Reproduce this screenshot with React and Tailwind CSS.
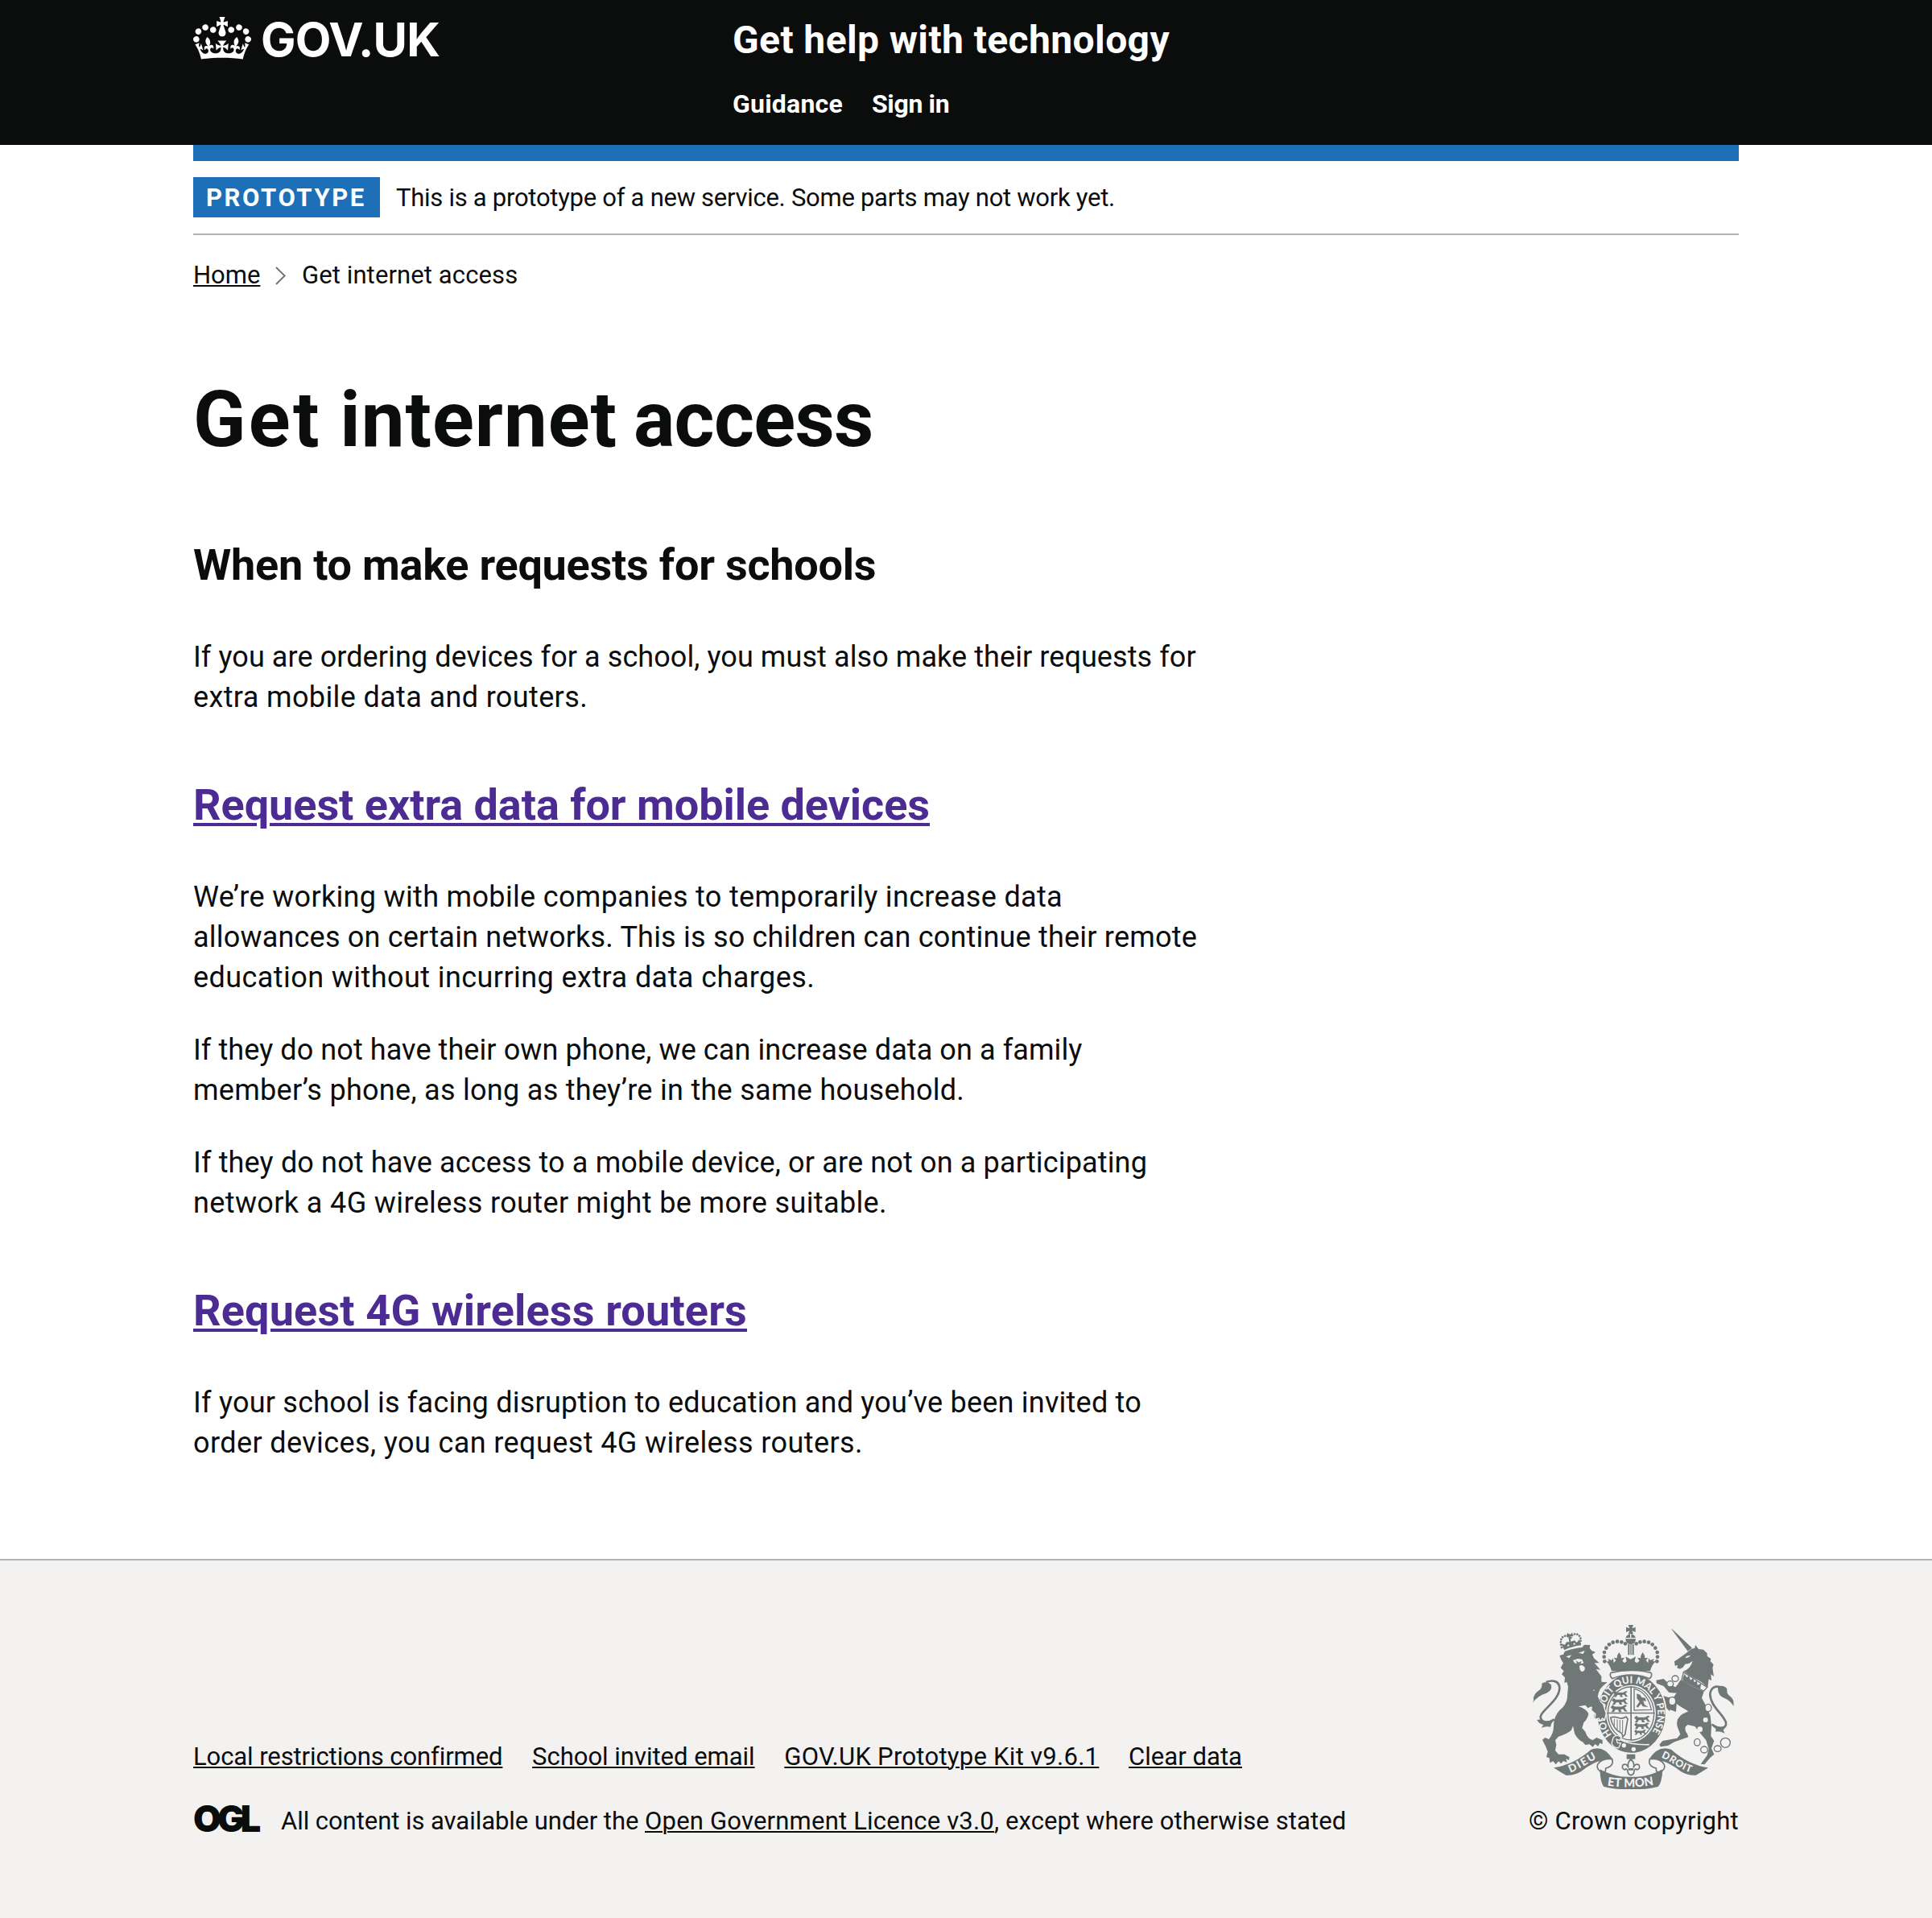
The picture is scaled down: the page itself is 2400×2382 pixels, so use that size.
import React from "react";

const GREY = "#6f7777";
const PAPER = "#f3f2f1";

function Crown({ className }) {
  return (
    <svg viewBox="0 0 132 97" className={className} fill="currentColor" aria-hidden="true" preserveAspectRatio="none">
      <path d="M25 30.2c3.5 1.5 7.7-.2 9.1-3.7 1.5-3.6-.2-7.8-3.9-9.2-3.6-1.4-7.6.3-9.1 3.9-1.4 3.5.3 7.5 3.9 9zM9 39.5c3.6 1.5 7.8-.2 9.2-3.7 1.5-3.6-.2-7.8-3.9-9.1-3.6-1.5-7.6.2-9.1 3.8-1.4 3.5.3 7.5 3.8 9zM4.4 57.2c3.5 1.5 7.7-.2 9.1-3.8 1.5-3.6-.2-7.7-3.9-9.1-3.5-1.5-7.6.3-9.1 3.8-1.4 3.5.3 7.6 3.9 9.1zm38.3-21.4c3.5 1.5 7.7-.2 9.1-3.8 1.5-3.6-.2-7.7-3.9-9.1-3.6-1.5-7.6.3-9.1 3.8-1.3 3.6.4 7.7 3.9 9.1zm64.4-5.6c-3.6 1.5-7.8-.2-9.1-3.7-1.5-3.6.2-7.8 3.8-9.2 3.6-1.4 7.7.3 9.2 3.9 1.3 3.5-.4 7.5-3.9 9zm15.9 9.3c-3.6 1.5-7.7-.2-9.1-3.7-1.5-3.6.2-7.8 3.7-9.1 3.6-1.5 7.7.2 9.2 3.8 1.5 3.5-.3 7.5-3.8 9zm4.7 17.7c-3.6 1.5-7.8-.2-9.2-3.8-1.5-3.6.2-7.7 3.9-9.1 3.6-1.5 7.7.3 9.2 3.8 1.3 3.5-.4 7.6-3.9 9.1zM89.3 35.8c-3.6 1.5-7.8-.2-9.2-3.8-1.4-3.6.2-7.7 3.9-9.1 3.6-1.5 7.7.3 9.2 3.8 1.4 3.6-.3 7.7-3.9 9.1zM69.7 17.7l8.9 4.7V9.3l-8.9 2.8c-.2-.3-.5-.6-.9-.9L72.4 0H59.6l3.5 11.2c-.3.3-.6.5-.9.9l-8.8-2.8v13.1l8.8-4.7c.3.3.6.7.9.9l-5 15.4v.1c-.2.8-.4 1.6-.4 2.4 0 4.1 3.1 7.5 7 8.1h.2c.3 0 .7.1 1 .1.4 0 .7 0 1-.1h.2c4-.6 7.1-4.1 7.1-8.1 0-.8-.1-1.7-.4-2.4V34l-5.1-15.4c.4-.2.7-.6 1-.9zM66 92.8c16.9 0 32.8 1.1 47.1 3.2 4-16.9 8.9-26.7 14-33.5l-9.6-3.4c1 4.9 1.1 7.2 0 10.2-1.5-1.4-3-4.3-4.2-8.7L108.6 76c2.8-2 5-3.2 7.5-3.3-4.4 9.4-10 11.9-13.6 11.2-4.3-.8-6.3-4.6-5.6-7.9 1-4.7 5.7-5.9 8-.5 4.3-8.7-3-11.4-7.6-8.8 7.1-7.2 7.9-13.5 2.1-21.1-8 6.1-8.1 12.3-4.5 20.8-4.7-5.4-12.1-2.5-9.5 6.2 3.4-5.2 7.9-2 7.2 3.1-.6 4.3-6.4 7.8-13.5 7.2-10.3-.9-10.9-8-11.2-13.8 2.5-.5 7.1 1.8 11 7.3L80.2 60c-4.1 4.4-8 5.3-12.3 5.4 1.4-4.4 8-11.6 8-11.6H55.5s6.4 7.2 7.9 11.6c-4.2-.1-8-1-12.3-5.4l1.4 16.4c3.9-5.5 8.5-7.7 10.9-7.3-.3 5.8-.9 12.8-11.1 13.8-7.2.6-12.9-2.9-13.5-7.2-.7-5 3.8-8.3 7.1-3.1 2.7-8.7-4.6-11.6-9.4-6.2 3.7-8.5 3.6-14.7-4.6-20.8-5.8 7.6-5 13.9 2.2 21.1-4.7-2.6-11.9.1-7.7 8.8 2.3-5.5 7.1-4.2 8.1.5.7 3.3-1.3 7.1-5.7 7.9-3.5.7-9-1.8-13.5-11.2 2.5.1 4.7 1.3 7.5 3.3l-4.7-15.4c-1.2 4.4-2.7 7.2-4.3 8.7-1.1-3-.9-5.3 0-10.2l-9.5 3.4c5 6.9 9.9 16.7 14 33.5 14.8-2.1 30.8-3.2 47.7-3.2z" />
    </svg>
  );
}

const BEADS = [[340, 190], [338, 173], [339, 156], [346, 140], [357, 127], [371, 119], [387, 116], [403, 118], [417, 124]];

function SmallLion({ x, y, s = 1 }) {
  return (
    <path
      transform={`translate(${x} ${y}) scale(${s})`}
      d="M0 8L8 0L14 6H38L50 0L56 4L48 8L52 16L58 22H48L42 14L34 16L38 24H28L26 16L16 16L12 24H2L8 16L4 12Z"
    />
  );
}

function Crest({ className }) {
  return (
    <svg viewBox="72 54 750 612" className={className} role="img" aria-label="Royal coat of arms" fill={GREY}>
      <defs>
        <path id="garter" d="M367 463A99 113 0 1 1 512 460" />
        <path id="dieu" d="M212 605C250 590 280 568 320 546" />
        <path id="droit" d="M550 547C590 562 616 592 668 606" />
        <path id="etmon" d="M350 652C400 661 475 661 528 648" />
      </defs>

      {/* small crown on the lion */}
      <g fill="none" stroke={GREY} strokeWidth="8" strokeLinecap="round" strokeDasharray="0.1 10">
        <path d="M180 138C164 92 206 84 211 108" />
        <path d="M248 124C262 84 218 76 213 106" />
      </g>
      <path d="M201 84L212 90L220 82L219 96L212 96L214 116L228 112L236 120L246 108L252 130Q218 134 190 148L178 124L192 128L198 118L208 118L206 98L198 97Z" />
      <path d="M200 134l4-8 6 6zM222 128l5-8 5 7z" fill={PAPER} />

      {/* lion */}
      <path d="M172 168L186 164L192 152Q230 140 256 138L264 128L286 129L284 140L292 150L306 155L294 164L300 178L320 196L302 196L324 221L308 219L328 245L328 266L350 268Q334 280 324 292Q316 306 314 322L332 342L346 378L342 408L330 414L324 402L314 408L312 398L300 402L302 388L308 378L290 370L296 354L278 364L268 353L242 358Q268 364 280 384Q278 402 262 418L256 438L268 452Q276 478 296 483L310 474L332 483V498L322 494L316 506L304 498L296 509L284 499L268 501L258 490Q238 480 228 458L222 430L216 446Q200 460 168 470L156 484L160 500L156 522L168 536L190 536L209 547L207 558L196 553L200 566L186 561L178 571L168 562L158 574L148 562L136 568L134 550L123 546L128 526L120 506L108 482L118 474L132 480Q150 460 150 430Q150 396 172 372Q194 356 200 330L204 284L199 266L190 271L192 250L180 238L188 226L176 214L186 196L178 184Z" />
      <path d="M196 172L216 166L208 178ZM243 158L266 150L260 162ZM222 186L240 180L256 182L262 196L246 200L228 196ZM246 206Q258 200 266 212Q268 226 256 228Q246 226 246 206Z" fill={PAPER} />
      <path d="M232 186l12 8 10-6-4 12h-12z" />
      <path fill="none" stroke={GREY} strokeWidth="8" d="M152 406C120 428 92 408 104 388C120 362 172 330 172 288C170 262 146 258 122 267" />
      <path d="M106 272Q126 262 140 276Q148 296 124 308Q92 316 72 344Q78 330 74 326Q82 304 98 296Q108 286 106 272ZM88 408L104 406Q116 422 154 404Q140 420 138 434Q128 430 104 437L112 426Q96 424 88 408Z" />

      {/* unicorn */}
      <path d="M588 68L594 72L666 140L650 152Z" />
      <path d="M663 144L676 140L678 128L690 144L708 146L722 160V170L736 180L734 190L746 202L742 214L747 246L736 238L738 262L728 256L724 288Q700 262 676 254Q650 240 634 226Q660 218 668 188L654 198L640 200L632 212L620 218L610 214L612 204L602 206L600 190L612 182L640 162Z" />
      <path d="M640 176Q646 166 660 168Q650 180 640 176Z" fill={PAPER} />
      <path d="M634 230L722 286L710 300L626 262Z" fill={PAPER} stroke={GREY} strokeWidth="4" />
      <path d="M632 250l6-14 8 14 8-8 6 18 10-8 4 16 10-6 2 16 14-6-4 22L630 262z" />
      <path d="M622 260Q664 282 710 302L702 326Q720 356 734 392L738 430L736 468L748 486L738 514L748 536L734 548L712 574L698 572L722 540L728 516L718 484L700 462L676 432L650 426Q630 436 648 460L652 472L600 490L576 504L548 508L544 500L556 486L610 476L622 462L610 430Q606 400 630 386L652 376L622 358L608 348L606 378L584 370L582 376L556 348L550 330L558 318L578 324L598 322L608 308L580 306L560 282L534 272L532 260L560 255L582 276L604 286L612 276Z" />
      <g fill="none" stroke={GREY} strokeWidth="4">
        <ellipse cx="603" cy="254" rx="12" ry="11" fill={PAPER} />
        <ellipse cx="584" cy="274" rx="12" ry="11" fill={PAPER} />
        <ellipse cx="592" cy="338" rx="13" ry="15" fill={PAPER} />
        <ellipse cx="726" cy="363" rx="12" ry="14" fill={PAPER} />
        <ellipse cx="685" cy="491" rx="11" ry="13" />
        <ellipse cx="711" cy="519" rx="13" ry="12" />
        <ellipse cx="761" cy="515" rx="13" ry="11" />
        <circle cx="790" cy="493" r="18" />
        <path strokeWidth="8" d="M740 424C764 450 796 440 792 418C784 388 734 358 733 312C736 286 754 280 772 286" />
      </g>
      <circle cx="716" cy="408" r="9" fill={PAPER} />
      <circle cx="695" cy="443" r="10" fill={PAPER} />
      <path d="M762 284Q784 276 796 292Q794 312 808 320Q824 332 820 356Q808 336 788 328Q760 318 762 284ZM744 424Q768 440 796 428L782 446L788 458Q766 448 754 452Q756 436 744 424Z" />

      {/* garter */}
      <ellipse cx="440" cy="384" rx="129" ry="149" stroke={PAPER} strokeWidth="5" />
      <ellipse cx="438" cy="384" rx="93" ry="106" fill={PAPER} />
      <ellipse cx="438" cy="384" rx="86" ry="99" fill="none" stroke={GREY} strokeWidth="4" />
      <text fill={PAPER} className="font-[Lato]" fontSize="37" fontWeight="900">
        <textPath href="#garter" textLength="490" lengthAdjust="spacingAndGlyphs">HONI SOIT QUI MAL Y PENSE</textPath>
      </text>
      <path d="M436 282h5v202h-5zM349 380h178v5H349z" />
      <SmallLion x="372" y="300" s="0.95" />
      <SmallLion x="366" y="326" s="1.05" />
      <SmallLion x="362" y="352" s="1.1" />
      <SmallLion x="450" y="392" s="1.05" />
      <SmallLion x="450" y="418" s="1" />
      <SmallLion x="450" y="444" s="0.8" />
      <path d="M450 292Q500 304 514 370L450 372Z" fill="none" stroke={GREY} strokeWidth="4" />
      <path d="M460 310l12 4 6 10 14 2 2 14-10-4 4 14 14 10-20-2-6-10-12 14-6-4 12-18-10-12z" />
      <path d="M362 400Q372 394 390 400Q404 406 420 396L426 404L416 462L408 470L404 458Q372 444 362 400Z" fill="none" stroke={GREY} strokeWidth="5" />
      <path d="M376 404V430M387 406V444M397 408V452M407 408V456" stroke={GREY} strokeWidth="3" />
      {/* buckle */}
      <path d="M372 474Q386 458 402 474L396 484L384 480L388 494L400 494L392 512Q374 514 366 496Z" fill={GREY} stroke={PAPER} strokeWidth="4" />
      <path d="M400 482Q440 502 506 500" fill="none" stroke={PAPER} strokeWidth="5" />
      <circle cx="412" cy="503" r="8" fill={PAPER} />
      <circle cx="448" cy="517" r="8" fill={PAPER} />
      {/* lion's forepaw over the garter */}
      <path d="M300 300L318 334L334 348L346 384L340 408L332 402L324 412L318 402L302 406L306 386L290 372Z" stroke={PAPER} strokeWidth="4" />
      <path d="M270 300L304 300L328 350L296 360L280 356Z" />

      {/* royal crown */}
      <path d="M366 226Q360 204 346 190L356 190L352 180L366 186L372 178L374 196L382 186L374 176L386 178L387 168L394 156L401 168L402 178L414 176L406 188L414 196L422 190L418 172L437 182L456 172L452 190L460 196L470 188L462 176L474 178L475 168L482 156L489 168L490 178L502 176L494 186L502 196L504 178L510 186L524 180L520 190L530 190Q514 206 510 226Z" />
      <path d="M364 232Q438 214 512 232Q520 242 508 254Q438 226 368 254Q356 242 364 232Z" fill={PAPER} stroke={GREY} strokeWidth="5" />
      {BEADS.map(([x, y]) => (
        <g key={x + "-" + y}>
          <circle cx={x} cy={y} r="7" />
          <circle cx={875 - x} cy={y} r="7" />
        </g>
      ))}
      <path d="M428 54h19l-5 13 13-5v19l-13-5 5 12h-19l5-12-13 5V62l13 5z" />
      <circle cx="437" cy="107" r="19" />
      <path d="M418 104h38M437 88v16" stroke={PAPER} strokeWidth="4" />
      <path d="M427 126h6v40h-6zM436 126h4v40h-4zM443 126h6v40h-6z" />

      {/* fleur-de-lis */}
      <path d="M422 536H454V554H422Z" />
      <path d="M438 554Q454 570 447 586Q454 568 468 576Q474 590 460 594Q454 586 450 598Q450 612 438 614Q426 612 426 598Q422 586 416 594Q402 590 408 576Q422 568 429 586Q422 570 438 554Z" fill="none" stroke={GREY} strokeWidth="5" />
      <path d="M428 588H448V596H428Z" />

      {/* ribbon */}
      <path d="M150 586Q226 574 290 518Q336 500 370 554Q352 548 330 560Q300 562 252 600Q226 616 196 614Q170 600 150 586Z" />
      <path d="M726 586Q650 574 588 518Q540 500 506 554Q524 548 546 560Q576 562 624 600Q650 616 680 614Q706 600 726 586Z" />
      <g fill={PAPER} stroke={GREY} strokeWidth="5">
        <path d="M368 554Q376 580 344 588Q346 602 334 606Q306 592 314 574Q330 548 368 554Z" />
        <path d="M508 554Q500 580 532 588Q530 602 542 606Q570 592 562 574Q546 548 508 554Z" />
      </g>
      <path d="M322 592Q380 624 438 620Q500 624 556 592Q554 640 540 656Q500 668 438 666Q376 668 336 656Q324 640 322 592Z" />
      <g fill={PAPER} className="font-[Lato]" fontWeight="900">
        <text fontSize="40"><textPath href="#dieu" textLength="112">DIEU</textPath></text>
        <text fontSize="37"><textPath href="#droit" textLength="124">DROIT</textPath></text>
        <text fontSize="44"><textPath href="#etmon" textLength="174">ET MON</textPath></text>
      </g>
    </svg>
  );
}

const H2 = "text-[54px] leading-[61px] font-bold";
const VISITED = "text-[#4c2c92] underline decoration-[4px] underline-offset-[4px]";
const LINK = "underline decoration-2 underline-offset-[2px]";
const BODY = "text-[36px] leading-[50px]";

function Line({ children, className }) {
  return <span className={"block w-max whitespace-nowrap " + className}>{children}</span>;
}

export default function App() {
  return (
    <div className="flex min-h-[2382px] flex-col bg-white font-[Roboto,sans-serif] text-[#0b0c0c]">
      <header className="flex h-[180px] bg-[#0b0c0c] px-[240px] text-white">
        <a className="flex w-[670px] items-start">
          <Crown className="mt-[21px] h-[53px] w-[72px]" />
          <span className="mt-[14px] ml-[12px] font-[Inter,sans-serif] text-[58px] leading-[70px] font-bold tracking-[-0.85px]">GOV.UK</span>
        </a>
        <div className="pt-[21px]">
          <a className="block w-max text-[48px] leading-[57px] font-bold tracking-[0.387px]">Get help with technology</a>
          <nav className="mt-8 flex text-[32px] leading-[38px] font-bold">
            <a className="w-[173px] tracking-[0.22px]">Guidance</a>
            <a className="tracking-[-0.35px]">Sign in</a>
          </nav>
        </div>
      </header>

      <main className="grow px-[240px]">
        <div className="h-5 bg-[#1d70b8]" />
        <div className="flex border-b-2 border-[#b1b4b6] py-5 text-[31px]">
          <strong className="h-[50px] w-[232px] bg-[#1d70b8] pl-4 leading-[51px] font-bold tracking-[2.6px] text-white">PROTOTYPE</strong>
          <span className="ml-5 h-[50px] leading-[51px] tracking-[-0.272px]">This is a prototype of a new service. Some parts may not work yet.</span>
        </div>

        <nav className="mt-[30px] flex h-[39px] text-[31px] leading-[39px]">
          <a className={LINK}>Home</a>
          <svg viewBox="0 0 13 23" className="mt-[9px] ml-[19px] h-[23px] w-[13px]" fill="none" stroke="#6f777b" strokeWidth="2">
            <path d="M1 1L11.6 11.5L1 22" />
          </svg>
          <span className="ml-[19.5px] tracking-[0.11px]">Get internet access</span>
        </nav>

        <h1 className="mt-[104px] w-max text-[96px] leading-[112px] font-bold [word-spacing:-5px]">
          <span className="tracking-[3.4px]">Get </span>
          <span className="tracking-[1px]">internet </span>
          <span className="tracking-[-0.7px]">access</span>
        </h1>

        <h2 className={H2 + " mt-[94px] w-max tracking-[-0.23px]"}>When to make requests for schools</h2>
        <p className={BODY + " mt-[59px]"}>
          <Line className="tracking-[0.08px]">If you are ordering devices for a school, you must also make their requests for</Line>
          <Line className="tracking-[0.373px]">extra mobile data and routers.</Line>
        </p>

        <h2 className={H2 + " mt-[78px]"}>
          <a className={VISITED + " tracking-[-0.048px]"}>Request extra data for mobile devices</a>
        </h2>
        <div className={BODY + " mt-[59px] flex flex-col gap-10"}>
          <p>
            <Line className="tracking-[0.331px]">We’re working with mobile companies to temporarily increase data</Line>
            <Line className="tracking-[0.203px]">allowances on certain networks. This is so children can continue their remote</Line>
            <Line className="tracking-[0.43px]">education without incurring extra data charges.</Line>
          </p>
          <p>
            <Line className="tracking-[0.083px]">If they do not have their own phone, we can increase data on a family</Line>
            <Line className="tracking-[0.294px]">member’s phone, as long as they’re in the same household.</Line>
          </p>
          <p>
            <Line className="tracking-[0.152px]">If they do not have access to a mobile device, or are not on a participating</Line>
            <Line className="tracking-[0.38px]">network a 4G wireless router might be more suitable.</Line>
          </p>
        </div>

        <h2 className={H2 + " mt-[78px]"}>
          <a className={VISITED + " tracking-[0.161px]"}>Request 4G wireless routers</a>
        </h2>
        <p className={BODY + " mt-[59px]"}>
          <Line className="tracking-[0.226px]">If your school is facing disruption to education and you’ve been invited to</Line>
          <Line className="tracking-[0.4px]">order devices, you can request 4G wireless routers.</Line>
        </p>
      </main>

      <footer className="flex h-[446px] items-start justify-between border-t-2 border-[#b1b4b6] bg-[#f3f2f1] px-[240px] text-[31px] leading-[39px]">
        <div className="pt-[224px]">
          <div className="flex gap-[36.7px]">
            <a className={LINK + " tracking-[-0.088px]"}>Local restrictions confirmed</a>
            <a className={LINK + " tracking-[-0.016px]"}>School invited email</a>
            <a className={LINK + " tracking-[0.273px]"}>GOV.UK Prototype Kit v9.6.1</a>
            <a className={LINK + " tracking-[0.044px]"}>Clear data</a>
          </div>
          <div className="mt-[41px] flex">
            <span className="-mt-[3px] w-[109px] font-[Inter,sans-serif] text-[45px] leading-[39px] font-black tracking-[-5px]">OGL</span>
            <span className="flex whitespace-pre">
              <span className="tracking-[-0.05px]">All content is available under the </span>
              <a className={LINK + " tracking-[0.199px]"}>Open Government Licence v3.0</a>
              <span className="tracking-[0.09px]">, except where otherwise stated</span>
            </span>
          </div>
        </div>
        <a className="flex flex-col items-end gap-5 pt-20">
          <Crest className="mr-[6px] h-[204px] w-[250px]" />
          <span className="tracking-[0.26px]">© Crown copyright</span>
        </a>
      </footer>
    </div>
  );
}
